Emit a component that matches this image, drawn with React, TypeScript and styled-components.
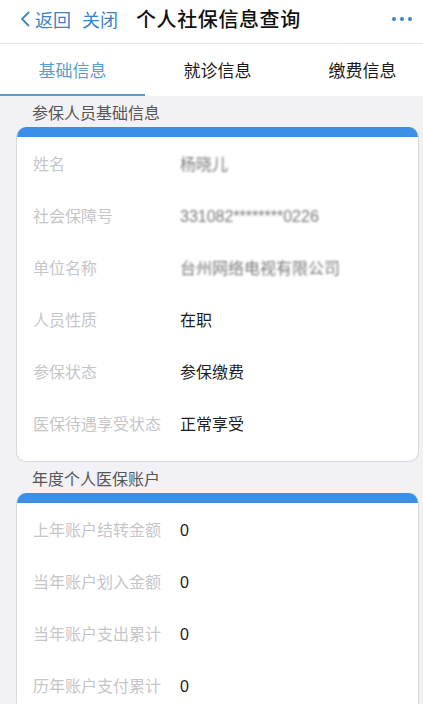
import React from "react";
import styled, { createGlobalStyle } from "styled-components";

const GlobalStyle = createGlobalStyle`
  html, body {
    margin: 0;
    padding: 0;
    background: #f2f1f6;
  }
  body {
    font-family: "Noto Sans CJK SC", "Noto Sans", "Liberation Sans", sans-serif;
    overflow: hidden;
  }
  * { box-sizing: border-box; }
`;

const Page = styled.div`
  width: 423px;
  height: 704px;
  overflow: hidden;
  display: flex;
  flex-direction: column;
  background: #f2f1f6;
  & > * { flex-shrink: 0; }
`;

const Header = styled.div`
  height: 44px;
  display: flex;
  align-items: center;
  padding: 0 11px 6px 20px;
  background: #fff;
  border-bottom: 1px solid #e3e3e6;
`;

const NavLink = styled.span<{ $gap?: number }>`
  display: flex;
  align-items: center;
  font-size: 18px;
  color: #3b84c4;
  margin-right: ${(p) => p.$gap ?? 0}px;
  line-height: 1;
`;

const Title = styled.span`
  font-size: 20px;
  letter-spacing: 0.6px;
  color: #111;
  line-height: 1;
  font-weight: 500;
  flex: 1;
`;

const More = styled.span`
  display: flex;
  gap: 4px;
`;

const Dot = styled.span`
  width: 4px;
  height: 4px;
  border-radius: 50%;
  background: #3b84c4;
`;

const Tabs = styled.div`
  display: grid;
  grid-template-columns: 145px 145px 145px;
  height: 52px;
  background: #fff;
  overflow: hidden;
`;

const Tab = styled.div<{ $active?: boolean }>`
  display: flex;
  align-items: center;
  justify-content: center;
  font-size: 17px;
  color: ${(p) => (p.$active ? "#5b9ccb" : "#1a1a1a")};
  border-bottom: 2px solid ${(p) => (p.$active ? "#5b9ccb" : "transparent")};
`;

const SectionTitle = styled.div`
  height: 31px;
  display: flex;
  align-items: center;
  padding-left: 32px;
  font-size: 16px;
  color: #555;
`;

const Card = styled.div<{ $pb?: number }>`
  margin: 0 4px 0 16px;
  background: #fff;
  border: 1px solid #d8d8dd;
  border-top: none;
  border-radius: 10px;
  overflow: hidden;
  padding-bottom: ${(p) => p.$pb ?? 0}px;
`;

const CardBar = styled.div`
  height: 10px;
  background: #3b8fe6;
`;

const Row = styled.div`
  display: grid;
  grid-template-columns: 147px 1fr;
  height: 52px;
  align-items: center;
  padding-left: 16px;
`;

const Label = styled.span`
  font-size: 16px;
  line-height: 22px;
  color: #c6c6c8;
  white-space: nowrap;
`;

const Value = styled.span`
  font-family: "Liberation Sans", "Noto Sans CJK SC", sans-serif;
  font-size: 16px;
  line-height: 22px;
  padding-top: 4px;
  color: #1e1e1e;
  white-space: nowrap;
`;

const Masked = styled(Value)`
  color: #7a7a7a;
  filter: blur(0.8px);
`;

const Chevron = () => (
  <svg width="12" height="18" viewBox="0 0 12 18" style={{ marginRight: 3 }}>
    <polyline points="9,2 2,9 9,16" fill="none" stroke="#3b84c4" strokeWidth="1.8" />
  </svg>
);

const basic: { label: string; value: string; masked?: boolean }[] = [
  { label: "姓名", value: "杨晓儿", masked: true },
  { label: "社会保障号", value: "331082********0226", masked: true },
  { label: "单位名称", value: "台州网络电视有限公司", masked: true },
  { label: "人员性质", value: "在职" },
  { label: "参保状态", value: "参保缴费" },
  { label: "医保待遇享受状态", value: "正常享受" },
];

const account = [
  { label: "上年账户结转金额", value: "0" },
  { label: "当年账户划入金额", value: "0" },
  { label: "当年账户支出累计", value: "0" },
  { label: "历年账户支付累计", value: "0" },
];

export default function App() {
  return (
    <>
      <GlobalStyle />
      <Page>
        <Header>
          <NavLink $gap={11}>
            <Chevron />
            返回
          </NavLink>
          <NavLink $gap={18}>关闭</NavLink>
          <Title>个人社保信息查询</Title>
          <More>
            <Dot />
            <Dot />
            <Dot />
          </More>
        </Header>
        <Tabs>
          <Tab $active>基础信息</Tab>
          <Tab>就诊信息</Tab>
          <Tab>缴费信息</Tab>
        </Tabs>
        <SectionTitle>参保人员基础信息</SectionTitle>
        <Card $pb={12}>
          <CardBar />
          {basic.map((r) => (
            <Row key={r.label}>
              <Label>{r.label}</Label>
              {r.masked ? <Masked>{r.value}</Masked> : <Value>{r.value}</Value>}
            </Row>
          ))}
        </Card>
        <SectionTitle>年度个人医保账户</SectionTitle>
        <Card>
          <CardBar />
          {account.map((r) => (
            <Row key={r.label}>
              <Label>{r.label}</Label>
              <Value>{r.value}</Value>
            </Row>
          ))}
        </Card>
      </Page>
    </>
  );
}
